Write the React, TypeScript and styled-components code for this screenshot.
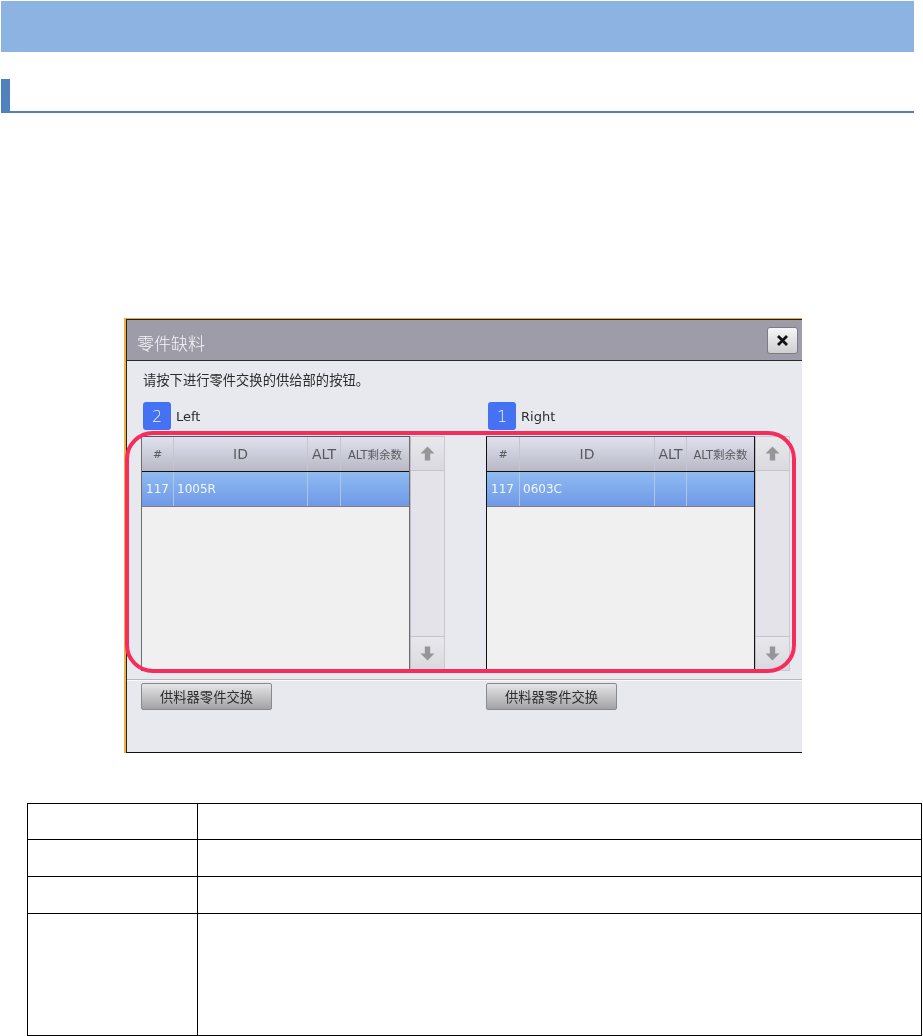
import React from 'react'
import styled, { createGlobalStyle } from 'styled-components'

const GlobalStyle = createGlobalStyle`
  html, body {
    margin: 0;
    padding: 0;
    background: #fff;
    font-family: 'DejaVu Sans', 'Noto Sans CJK SC', sans-serif;
  }
`

const Page = styled.div`
  width: 923px;
  height: 1036px;
  padding-top: 1px;
  box-sizing: border-box;
  overflow: hidden;
`

const TopBar = styled.div`
  width: 913px;
  height: 51px;
  margin-left: 1px;
  background: #8db3e2;
`

const SectionHead = styled.div`
  width: 913px;
  height: 34px;
  margin: 27px 0 0 1px;
  border-bottom: 2px solid #4f81bd;
  box-sizing: border-box;
`

const SectionMark = styled.div`
  width: 9px;
  height: 34px;
  background: #4f81bd;
`

const Figure = styled.div`
  width: 678px;
  height: 435px;
  margin: 205px 0 0 124px;
  border-top: 1px solid #f0a830;
  border-left: 2px solid #eeb040;
  box-sizing: border-box;
  filter: blur(0.3px);
`

const Dialog = styled.div`
  height: 100%;
  box-sizing: border-box;
  display: flex;
  flex-direction: column;
  background: #e8e9ee;
  border-top: 1px solid #222;
  border-bottom: 1px solid #111;
  border-left: 1px solid #222;
`

const TitleBar = styled.div`
  height: 41px;
  flex: none;
  box-sizing: border-box;
  display: flex;
  align-items: center;
  justify-content: space-between;
  padding: 0 4px 0 10px;
  background: #9e9ca9;
  border-bottom: 1px solid #2c2c30;
`

const Title = styled.div`
  font-size: 17px;
  font-weight: 300;
  color: #f6f6f8;
  padding-top: 4px;
`

const CloseButton = styled.div`
  width: 31px;
  height: 27px;
  display: flex;
  align-items: center;
  justify-content: center;
  box-sizing: border-box;
  border: 1px solid #7c7c82;
  border-radius: 3px;
  background: linear-gradient(#f6f6f6, #cfcfd2);
`

const Instruction = styled.div`
  height: 20px;
  margin: 10px 0 0 16px;
  font-size: 13.3px;
  line-height: 20px;
  color: #2c2c2c;
`

const Panels = styled.div`
  position: relative;
  display: grid;
  grid-template-columns: 345px 1fr;
  margin: 11px 0 0 14px;
`

const Outline = styled.div`
  position: absolute;
  left: -16px;
  top: 29px;
  width: 671px;
  height: 242px;
  box-sizing: border-box;
  border: 4px solid #f62d5c;
  border-radius: 28px;
  pointer-events: none;
`

const Panel = styled.div`
  display: flex;
  flex-direction: column;
`

const PanelHead = styled.div`
  height: 28px;
  margin: 0 0 6px 2px;
  display: flex;
  align-items: center;
  gap: 5px;
  font-size: 13px;
  color: #2c2c2c;
`

const Badge = styled.div`
  width: 28px;
  height: 28px;
  display: flex;
  align-items: center;
  justify-content: center;
  border-radius: 3px;
  background: #4472f2;
  color: #f4f6ff;
  font-size: 16px;
  font-weight: 300;
`

const TableRow = styled.div`
  display: flex;
  height: 235px;
`

const Table = styled.div<{ $dark: boolean }>`
  width: 269px;
  flex: none;
  box-sizing: border-box;
  border-top: 1px solid #555;
  border-bottom: 1px solid #222;
  border-left: 1px solid ${p => (p.$dark ? '#111' : '#6e6e6e')};
  border-right: 1px solid ${p => (p.$dark ? '#111' : '#6e6e6e')};
  background: #f0f0f0;
`

const HeaderRow = styled.div<{ $cols: string }>`
  display: grid;
  grid-template-columns: ${p => p.$cols};
  height: 35px;
  box-sizing: border-box;
  border-bottom: 1px solid #111;
  background: linear-gradient(#dfe1f0, #b8b9c4);
`

const HeaderCell = styled.div<{ $size: number }>`
  display: flex;
  align-items: center;
  justify-content: center;
  border-left: 1px solid #c3c5d2;
  font-size: ${p => p.$size}px;
  color: #5a5a5e;
  white-space: nowrap;
  &:first-child {
    border-left: 0;
  }
`

const DataRow = styled.div<{ $cols: string }>`
  display: grid;
  grid-template-columns: ${p => p.$cols};
  height: 35px;
  box-sizing: border-box;
  border-bottom: 1px solid #7d7d7d;
  background: linear-gradient(#8fbbf0, #7099e8);
`

const DataCell = styled.div`
  display: flex;
  align-items: center;
  padding-left: 3px;
  border-left: 1px solid #aec6ea;
  font-size: 12px;
  color: #f2f6fd;
  white-space: nowrap;
  &:first-child {
    padding-left: 4px;
    border-left: 0;
  }
`

const ScrollBar = styled.div`
  width: 35px;
  flex: none;
  box-sizing: border-box;
  display: flex;
  flex-direction: column;
  justify-content: space-between;
  background: #e3e3e9;
  border: 1px solid #c8c8ce;
  border-left: 1px solid #bcbcc2;
`

const ScrollButton = styled.div<{ $down?: boolean }>`
  height: 34px;
  display: flex;
  align-items: center;
  justify-content: center;
  box-sizing: border-box;
  background: linear-gradient(#e8e8ec, #d9d9df);
  border-${p => (p.$down ? 'top' : 'bottom')}: 1px solid #c4c4ca;
`

const Footer = styled.div`
  margin-top: 8px;
  padding: 3px 0 0 14px;
  display: grid;
  grid-template-columns: 345px 1fr;
  border-top: 1px solid #b6b6bb;
  box-shadow: inset 0 1px 0 #fafafa;
`

const FooterButton = styled.div`
  width: 131px;
  height: 27px;
  display: flex;
  align-items: center;
  justify-content: center;
  box-sizing: border-box;
  border: 1px solid #8a8a8e;
  border-radius: 2px;
  background: linear-gradient(#e6e6e8, #a2a2a6);
  font-size: 13.3px;
  color: #2e2e2e;
`

const InfoTable = styled.table`
  width: 895px;
  margin: 50px 0 0 27px;
  border-collapse: collapse;
  table-layout: fixed;
`

const InfoCell = styled.td<{ $height: number }>`
  height: ${p => p.$height}px;
  box-sizing: border-box;
  padding: 0;
  border: 1px solid #000;
  &:first-child {
    width: 170px;
  }
`

const ArrowIcon = ({ down }: { down?: boolean }) => (
  <svg width="15" height="15" viewBox="0 0 14 14">
    <path d={down ? 'M4.5 0.5h5V7h4L7 13.5 0.5 7h4z' : 'M4.5 13.5h5V7h4L7 0.5 0.5 7h4z'} fill="#969698" />
  </svg>
)

const CloseIcon = () => (
  <svg width="13" height="13" viewBox="0 0 13 13">
    <path d="M2 2l9 9M11 2l-9 9" stroke="#111" strokeWidth="2.8" fill="none" />
  </svg>
)

const sides = [
  { num: '2', label: 'Left', id: '1005R', cols: '31px 134px 33px 1fr', dark: false },
  { num: '1', label: 'Right', id: '0603C', cols: '32px 135px 32px 1fr', dark: true },
]

const infoRows = [36, 37, 37, 122]

const App = () => (
  <Page>
    <GlobalStyle />
    <TopBar />
    <SectionHead>
      <SectionMark />
    </SectionHead>
    <Figure>
      <Dialog>
        <TitleBar>
          <Title>零件缺料</Title>
          <CloseButton>
            <CloseIcon />
          </CloseButton>
        </TitleBar>
        <Instruction>请按下进行零件交换的供给部的按钮。</Instruction>
        <Panels>
          {sides.map(side => (
            <Panel key={side.label}>
              <PanelHead>
                <Badge>{side.num}</Badge>
                {side.label}
              </PanelHead>
              <TableRow>
                <Table $dark={side.dark}>
                  <HeaderRow $cols={side.cols}>
                    <HeaderCell $size={11}>#</HeaderCell>
                    <HeaderCell $size={14}>ID</HeaderCell>
                    <HeaderCell $size={14}>ALT</HeaderCell>
                    <HeaderCell $size={11.5}>ALT剩余数</HeaderCell>
                  </HeaderRow>
                  <DataRow $cols={side.cols}>
                    <DataCell>117</DataCell>
                    <DataCell>{side.id}</DataCell>
                    <DataCell />
                    <DataCell />
                  </DataRow>
                </Table>
                <ScrollBar>
                  <ScrollButton>
                    <ArrowIcon />
                  </ScrollButton>
                  <ScrollButton $down>
                    <ArrowIcon down />
                  </ScrollButton>
                </ScrollBar>
              </TableRow>
            </Panel>
          ))}
          <Outline />
        </Panels>
        <Footer>
          <FooterButton>供料器零件交换</FooterButton>
          <FooterButton>供料器零件交换</FooterButton>
        </Footer>
      </Dialog>
    </Figure>
    <InfoTable>
      <tbody>
        {infoRows.map((height, i) => (
          <tr key={i}>
            <InfoCell $height={height} />
            <InfoCell $height={height} />
          </tr>
        ))}
      </tbody>
    </InfoTable>
  </Page>
)

export default App
